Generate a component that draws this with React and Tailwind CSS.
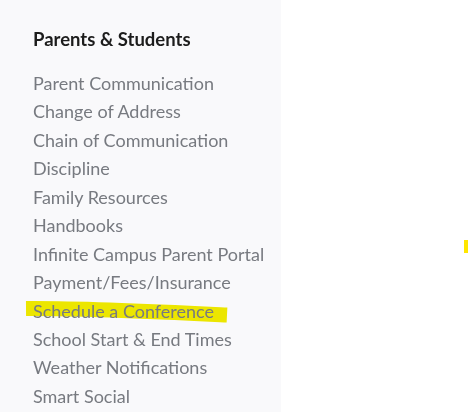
import React from 'react';

const links = [
  'Parent Communication',
  'Change of Address',
  'Chain of Communication',
  'Discipline',
  'Family Resources',
  'Handbooks',
  'Infinite Campus Parent Portal',
  'Payment/Fees/Insurance',
  'Schedule a Conference',
  'School Start & End Times',
  'Weather Notifications',
  'Smart Social',
];

const App = () => {
  return (
    <div className="relative flex w-[470px] h-[412px] overflow-hidden bg-white" style={{ fontFamily: 'Lato, "Open Sans", sans-serif' }}>
      <aside className="w-[281px] h-full bg-[#f9f9fb] pl-[33px] pt-[28px]">
        <h2 className="text-[18.5px] font-bold text-[#1c1c1c] leading-[22px]">Parents &amp; Students</h2>
        <ul className="mt-[19px]">
          {links.map((l) => (
            <li key={l} className="relative h-[28.45px] leading-[28.45px] text-[18px] text-[#777a80]">
              {l === 'Schedule a Conference' && (
                <svg className="absolute left-[-8px] top-[3px] mix-blend-multiply" width="210" height="28" viewBox="0 0 210 28">
                  <path d="M1 8.5 C 60 8, 140 12, 202 15" stroke="#f2ec00" strokeWidth="15" fill="none" strokeLinecap="butt" />
                </svg>
              )}
              <span className="relative">{l}</span>
            </li>
          ))}
        </ul>
      </aside>
      <div className="flex-1 relative">
        <div className="absolute left-[183px] top-[240px] w-[4px] h-[13px] bg-[#ffe600]" />
      </div>
    </div>
  );
};

export default App;
